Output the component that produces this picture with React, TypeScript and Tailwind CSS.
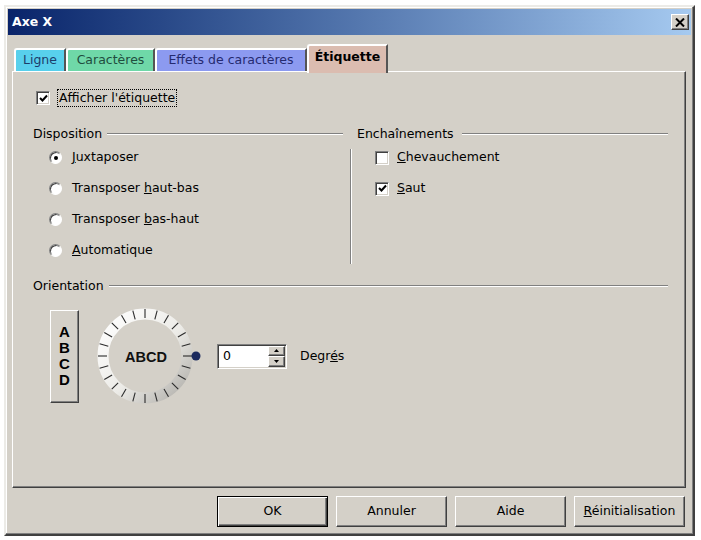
import React from 'react';

const raised =
  'bg-[#d4d0c8] border border-t-white border-l-white border-r-[#404040] border-b-[#404040] shadow-[inset_-1px_-1px_0_#808080]';
const sunken =
  'bg-white border border-t-[#808080] border-l-[#808080] border-r-white border-b-white shadow-[inset_1px_1px_0_#404040,inset_-1px_-1px_0_#d4d0c8]';

const Etched: React.FC<{ className?: string }> = ({ className = '' }) => (
  <div className={`h-[2px] border-t border-b border-t-[#808080] border-b-white ${className}`} />
);

const Radio: React.FC<{ checked?: boolean }> = ({ checked }) => (
  <span className="flex w-[13px] h-[13px] shrink-0 items-center justify-center rounded-full bg-white border border-t-[#808080] border-l-[#808080] border-r-white border-b-white shadow-[inset_1px_1px_0_#404040]">
    {checked && <span className="w-[4px] h-[4px] rounded-full bg-black" />}
  </span>
);

const Check: React.FC<{ checked?: boolean }> = ({ checked }) => (
  <span className={`flex w-[14px] h-[14px] shrink-0 items-center justify-center ${sunken}`}>
    {checked && (
      <svg width="9" height="9" viewBox="0 0 9 9">
        <path d="M1 4 L3.5 6.5 L8 1.5" fill="none" stroke="#000" strokeWidth="2" />
      </svg>
    )}
  </span>
);

const Dial = () => {
  const ticks = Array.from({ length: 24 }, (_, i) => i * 15);
  return (
    <svg width="120" height="120" viewBox="0 0 120 120" className="shrink-0">
      <defs>
        <linearGradient id="ring" x1="0" y1="0" x2="1" y2="1">
          <stop offset="0" stopColor="#ffffff" />
          <stop offset="0.55" stopColor="#ecebe7" />
          <stop offset="1" stopColor="#aeaca7" />
        </linearGradient>
      </defs>
      <circle cx="60" cy="60" r="42" fill="none" stroke="url(#ring)" strokeWidth="11" />
      {ticks.map((a) => {
        const r = (a * Math.PI) / 180;
        return (
          <line
            key={a}
            x1={60 + 38 * Math.cos(r)}
            y1={60 - 38 * Math.sin(r)}
            x2={60 + 47 * Math.cos(r)}
            y2={60 - 47 * Math.sin(r)}
            stroke="#2a2a2a"
            strokeWidth="1.1"
          />
        );
      })}
      <circle cx="111" cy="60" r="4.5" fill="#1b2a5e" />
      <text
        x="61"
        y="65.5"
        textAnchor="middle"
        fontFamily="Liberation Sans, Arial, sans-serif"
        fontWeight="bold"
        fontSize="14.5"
        fill="#111"
      >
        ABCD
      </text>
    </svg>
  );
};

const Button: React.FC<{ children: React.ReactNode; def?: boolean }> = ({ children, def }) => (
  <div
    className={`flex w-[111px] h-[31px] items-center justify-center bg-[#d4d0c8] ${
      def
        ? 'border border-black shadow-[inset_1px_1px_0_#fff,inset_-1px_-1px_0_#404040,inset_-2px_-2px_0_#808080]'
        : 'border border-t-white border-l-white border-r-[#404040] border-b-[#404040] shadow-[inset_-1px_-1px_0_#808080]'
    }`}
  >
    {children}
  </div>
);

export default function App() {
  return (
    <div className="w-[701px] h-[540px] bg-white pt-[5px] pl-[4px] font-['DejaVu_Sans',sans-serif] text-[12.5px] text-black">
      <div className="w-[691px] h-[531px] bg-[#d4d0c8] p-[2px] border-2 border-t-[#ecebe7] border-l-[#ecebe7] border-r-[#404040] border-b-[#404040] shadow-[inset_-1px_-1px_0_#808080,inset_1px_1px_0_#ffffff]">
        {/* title bar */}
        <div className="flex h-[26px] items-center justify-between bg-gradient-to-r from-[#0a246a] to-[#a6caf0]">
          <span className="pl-[4px] text-white font-bold text-[12.5px]">Axe X</span>
          <div className={`flex w-[18px] h-[16px] mr-[2px] items-center justify-center ${raised}`}>
            <svg width="10" height="9" viewBox="0 0 10 9">
              <path d="M1 0.5 L9 8.5 M9 0.5 L1 8.5" stroke="#000" strokeWidth="2" />
            </svg>
          </div>
        </div>

        {/* tabs */}
        <div className="flex items-end mt-[9px] ml-[6px] leading-none">
          <div className="flex w-[52px] h-[23px] items-center justify-center bg-[#58d0ec] text-[#1b3d6b] border-l-2 border-t-2 border-r-2 border-l-white border-t-white border-r-[#555] rounded-tl-[3px]">
            Ligne
          </div>
          <div className="flex w-[89px] h-[23px] items-center justify-center bg-[#6fd8a8] text-[#1f4d3e] border-l-2 border-t-2 border-r-2 border-l-white border-t-white border-r-[#555] rounded-tl-[3px]">
            Caractères
          </div>
          <div className="flex w-[152px] h-[23px] items-center justify-center bg-[#8c9af0] text-[#252a70] border-l-2 border-t-2 border-r-2 border-l-white border-t-white border-r-[#555] rounded-tl-[3px]">
            Effets de caractères
          </div>
          <div className="relative z-10 flex w-[81px] h-[29px] -mb-[2px] pb-[4px] items-center justify-center bg-[#dbbcb0] font-bold border-l-2 border-t-2 border-r-2 border-l-white border-t-white border-r-[#555] rounded-tl-[3px]">
            Étiquette
          </div>
        </div>

        {/* panel */}
        <div className="ml-[4px] w-[674px] h-[417px] border border-t-white border-l-white border-r-[#404040] border-b-[#404040] shadow-[inset_-1px_-1px_0_#808080] pl-[20px] leading-none">
          <div className="flex h-[18px] mt-[17px] ml-[3px] items-center">
            <Check checked />
            <span className="ml-[7px] px-[1px] py-[2px] border border-dotted border-black">Afficher l'étiquette</span>
          </div>

          <div className="flex mt-[20px]">
            {/* Disposition */}
            <div className="flex flex-col w-[310px]">
              <div className="flex h-[14px] items-center">
                <span>Disposition</span>
                <Etched className="flex-1 ml-[5px]" />
              </div>
              <div className="flex flex-col mt-[1px]">
                <div className="flex h-[31px] items-center pl-[16px]">
                  <Radio checked />
                  <span className="ml-[10px]"><u>J</u>uxtaposer</span>
                </div>
                <div className="flex h-[31px] items-center pl-[16px]">
                  <Radio />
                  <span className="ml-[10px]">Transposer <u>h</u>aut-bas</span>
                </div>
                <div className="flex h-[31px] items-center pl-[16px]">
                  <Radio />
                  <span className="ml-[10px]">Transposer <u>b</u>as-haut</span>
                </div>
                <div className="flex h-[31px] items-center pl-[16px]">
                  <Radio />
                  <span className="ml-[10px]"><u>A</u>utomatique</span>
                </div>
              </div>
            </div>

            {/* Enchaînements */}
            <div className="flex flex-col w-[318px] ml-[7px]">
              <div className="flex h-[14px] items-center pl-[7px]">
                <span>Enchaînements</span>
                <Etched className="flex-1 ml-[8px]" />
              </div>
              <div className="flex items-start mt-[1px]">
                <div className="w-[2px] h-[115px] mt-[7px] border-l border-r border-l-[#808080] border-r-white" />
                <div className="flex flex-col ml-[23px]">
                  <div className="flex h-[31px] items-center">
                    <Check />
                    <span className="ml-[8px]"><u>C</u>hevauchement</span>
                  </div>
                  <div className="flex h-[31px] items-center">
                    <Check checked />
                    <span className="ml-[8px]"><u>S</u>aut</span>
                  </div>
                </div>
              </div>
            </div>
          </div>

          {/* Orientation */}
          <div className="flex w-[635px] h-[14px] mt-[13px] items-center">
            <span>Orientation</span>
            <Etched className="flex-1 ml-[5px]" />
          </div>
          <div className="flex h-[120px] mt-[3px] items-center">
            <div className={`flex flex-col w-[29px] h-[93px] ml-[17px] items-center justify-center font-['Liberation_Sans',sans-serif] font-bold text-[15px] leading-[16px] ${raised}`}>
              <span>A</span>
              <span>B</span>
              <span>C</span>
              <span>D</span>
            </div>
            <div className="ml-[6px] flex">
              <Dial />
            </div>
            <div className={`flex w-[70px] h-[25px] ml-[12px] ${sunken}`}>
              <div className="flex flex-1 items-center pl-[5px]">0</div>
              <div className="flex flex-col w-[17px] my-[1px] mr-[1px]">
                <div className={`flex flex-1 items-center justify-center ${raised}`}>
                  <svg width="5" height="3" viewBox="0 0 5 3"><path d="M0 3 L2.5 0 L5 3 Z" fill="#000" /></svg>
                </div>
                <div className={`flex flex-1 items-center justify-center ${raised}`}>
                  <svg width="5" height="3" viewBox="0 0 5 3"><path d="M0 0 L2.5 3 L5 0 Z" fill="#000" /></svg>
                </div>
              </div>
            </div>
            <span className="ml-[13px]">Degr<u>é</u>s</span>
          </div>
        </div>

        {/* buttons */}
        <div className="flex justify-end gap-[8px] mt-[8px] mr-[6px] leading-none">
          <Button def>OK</Button>
          <Button>Annuler</Button>
          <Button>Aide</Button>
          <Button><span><u>R</u>éinitialisation</span></Button>
        </div>
      </div>
    </div>
  );
}
